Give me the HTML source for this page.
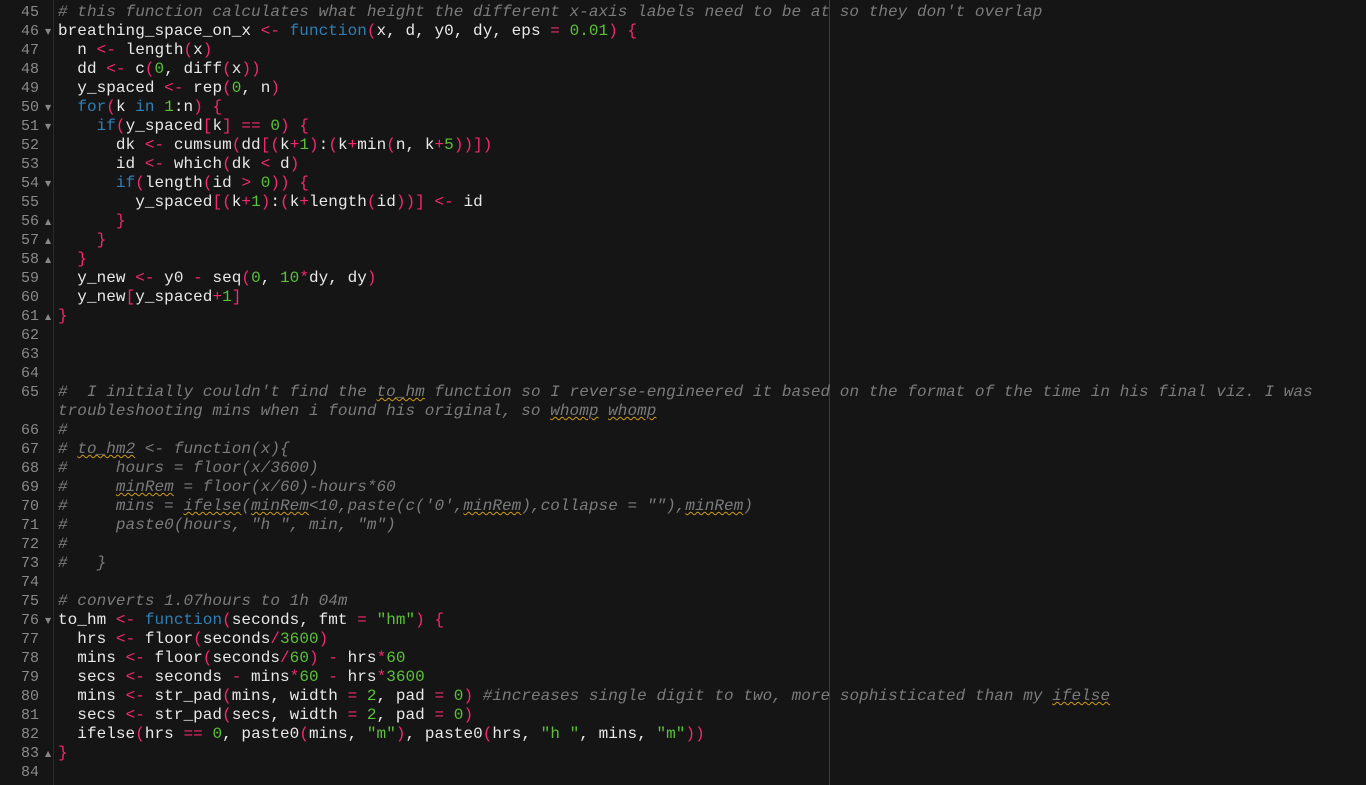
<!DOCTYPE html>
<html><head><meta charset="utf-8"><style>
html,body{margin:0;padding:0;background:#151515;width:1366px;height:785px;overflow:hidden}
#g{position:absolute;left:0;top:0;width:53px;height:785px;border-right:1px solid #2a2a2a}
#m{position:absolute;left:829px;top:0;width:1px;height:785px;background:#3c3c3c}
.l{position:absolute;left:0;height:19px;line-height:19px;font-family:"Liberation Mono",monospace;font-size:16px;white-space:pre;color:#e8e8e8}
.n{position:absolute;left:0;width:39px;text-align:right;color:#8a8a8a;font-family:"Liberation Mono",monospace;font-size:15px;line-height:19px;height:19px}
.a{position:absolute;left:45px;color:#888;font-size:8px;line-height:19px;height:19px;font-family:"DejaVu Sans",sans-serif}
.t{position:absolute;left:58px;line-height:19px;height:19px;letter-spacing:0.05px}
.c{color:#7b7b7b;font-style:italic}
.k{color:#2f7fb5}
.o{color:#f4286f}
.d{color:#5cc13a}
.s{color:#5cc13a}
.w{text-decoration:underline wavy #d09a1a;text-decoration-thickness:1px}
</style></head><body>
<div id="g"></div><div id="m"></div>
<div class="l" style="top:3px"><span class="n">45</span><span class="t"><span class="c"># this function calculates what height the different x-axis labels need to be at so they don't overlap</span></span></div>
<div class="l" style="top:22px"><span class="n">46</span><span class="a">▼</span><span class="t">breathing_space_on_x <span class="o">&lt;-</span> <span class="k">function</span><span class="o">(</span>x, d, y0, dy, eps <span class="o">=</span> <span class="d">0.01</span><span class="o">)</span> <span class="o">{</span></span></div>
<div class="l" style="top:41px"><span class="n">47</span><span class="t">  n <span class="o">&lt;-</span> length<span class="o">(</span>x<span class="o">)</span></span></div>
<div class="l" style="top:60px"><span class="n">48</span><span class="t">  dd <span class="o">&lt;-</span> c<span class="o">(</span><span class="d">0</span>, diff<span class="o">(</span>x<span class="o">))</span></span></div>
<div class="l" style="top:79px"><span class="n">49</span><span class="t">  y_spaced <span class="o">&lt;-</span> rep<span class="o">(</span><span class="d">0</span>, n<span class="o">)</span></span></div>
<div class="l" style="top:98px"><span class="n">50</span><span class="a">▼</span><span class="t">  <span class="k">for</span><span class="o">(</span>k <span class="k">in</span> <span class="d">1</span>:n<span class="o">)</span> <span class="o">{</span></span></div>
<div class="l" style="top:117px"><span class="n">51</span><span class="a">▼</span><span class="t">    <span class="k">if</span><span class="o">(</span>y_spaced<span class="o">[</span>k<span class="o">]</span> <span class="o">==</span> <span class="d">0</span><span class="o">)</span> <span class="o">{</span></span></div>
<div class="l" style="top:136px"><span class="n">52</span><span class="t">      dk <span class="o">&lt;-</span> cumsum<span class="o">(</span>dd<span class="o">[(</span>k<span class="o">+</span><span class="d">1</span><span class="o">)</span>:<span class="o">(</span>k<span class="o">+</span>min<span class="o">(</span>n, k<span class="o">+</span><span class="d">5</span><span class="o">))])</span></span></div>
<div class="l" style="top:155px"><span class="n">53</span><span class="t">      id <span class="o">&lt;-</span> which<span class="o">(</span>dk <span class="o">&lt;</span> d<span class="o">)</span></span></div>
<div class="l" style="top:174px"><span class="n">54</span><span class="a">▼</span><span class="t">      <span class="k">if</span><span class="o">(</span>length<span class="o">(</span>id <span class="o">&gt;</span> <span class="d">0</span><span class="o">))</span> <span class="o">{</span></span></div>
<div class="l" style="top:193px"><span class="n">55</span><span class="t">        y_spaced<span class="o">[(</span>k<span class="o">+</span><span class="d">1</span><span class="o">)</span>:<span class="o">(</span>k<span class="o">+</span>length<span class="o">(</span>id<span class="o">))]</span> <span class="o">&lt;-</span> id</span></div>
<div class="l" style="top:212px"><span class="n">56</span><span class="a">▲</span><span class="t">      <span class="o">}</span></span></div>
<div class="l" style="top:231px"><span class="n">57</span><span class="a">▲</span><span class="t">    <span class="o">}</span></span></div>
<div class="l" style="top:250px"><span class="n">58</span><span class="a">▲</span><span class="t">  <span class="o">}</span></span></div>
<div class="l" style="top:269px"><span class="n">59</span><span class="t">  y_new <span class="o">&lt;-</span> y0 <span class="o">-</span> seq<span class="o">(</span><span class="d">0</span>, <span class="d">10</span><span class="o">*</span>dy, dy<span class="o">)</span></span></div>
<div class="l" style="top:288px"><span class="n">60</span><span class="t">  y_new<span class="o">[</span>y_spaced<span class="o">+</span><span class="d">1</span><span class="o">]</span></span></div>
<div class="l" style="top:307px"><span class="n">61</span><span class="a">▲</span><span class="t"><span class="o">}</span></span></div>
<div class="l" style="top:326px"><span class="n">62</span></div>
<div class="l" style="top:345px"><span class="n">63</span></div>
<div class="l" style="top:364px"><span class="n">64</span></div>
<div class="l" style="top:383px"><span class="n">65</span><span class="t"><span class="c">#  I initially couldn't find the <span class="w">to_hm</span> function so I reverse-engineered it based on the format of the time in his final viz. I was</span></span></div>
<div class="l" style="top:402px"><span class="t"><span class="c">troubleshooting mins when i found his original, so <span class="w">whomp</span> <span class="w">whomp</span></span></span></div>
<div class="l" style="top:421px"><span class="n">66</span><span class="t"><span class="c">#</span></span></div>
<div class="l" style="top:440px"><span class="n">67</span><span class="t"><span class="c"># <span class="w">to_hm2</span> &lt;- function(x){</span></span></div>
<div class="l" style="top:459px"><span class="n">68</span><span class="t"><span class="c">#     hours = floor(x/3600)</span></span></div>
<div class="l" style="top:478px"><span class="n">69</span><span class="t"><span class="c">#     <span class="w">minRem</span> = floor(x/60)-hours*60</span></span></div>
<div class="l" style="top:497px"><span class="n">70</span><span class="t"><span class="c">#     mins = <span class="w">ifelse</span>(<span class="w">minRem</span>&lt;10,paste(c('0',<span class="w">minRem</span>),collapse = ""),<span class="w">minRem</span>)</span></span></div>
<div class="l" style="top:516px"><span class="n">71</span><span class="t"><span class="c">#     paste0(hours, "h ", min, "m")</span></span></div>
<div class="l" style="top:535px"><span class="n">72</span><span class="t"><span class="c">#</span></span></div>
<div class="l" style="top:554px"><span class="n">73</span><span class="t"><span class="c">#   }</span></span></div>
<div class="l" style="top:573px"><span class="n">74</span></div>
<div class="l" style="top:592px"><span class="n">75</span><span class="t"><span class="c"># converts 1.07hours to 1h 04m</span></span></div>
<div class="l" style="top:611px"><span class="n">76</span><span class="a">▼</span><span class="t">to_hm <span class="o">&lt;-</span> <span class="k">function</span><span class="o">(</span>seconds, fmt <span class="o">=</span> <span class="s">"hm"</span><span class="o">)</span> <span class="o">{</span></span></div>
<div class="l" style="top:630px"><span class="n">77</span><span class="t">  hrs <span class="o">&lt;-</span> floor<span class="o">(</span>seconds<span class="o">/</span><span class="d">3600</span><span class="o">)</span></span></div>
<div class="l" style="top:649px"><span class="n">78</span><span class="t">  mins <span class="o">&lt;-</span> floor<span class="o">(</span>seconds<span class="o">/</span><span class="d">60</span><span class="o">)</span> <span class="o">-</span> hrs<span class="o">*</span><span class="d">60</span></span></div>
<div class="l" style="top:668px"><span class="n">79</span><span class="t">  secs <span class="o">&lt;-</span> seconds <span class="o">-</span> mins<span class="o">*</span><span class="d">60</span> <span class="o">-</span> hrs<span class="o">*</span><span class="d">3600</span></span></div>
<div class="l" style="top:687px"><span class="n">80</span><span class="t">  mins <span class="o">&lt;-</span> str_pad<span class="o">(</span>mins, width <span class="o">=</span> <span class="d">2</span>, pad <span class="o">=</span> <span class="d">0</span><span class="o">)</span> <span class="c">#increases single digit to two, more sophisticated than my <span class="w">ifelse</span></span></span></div>
<div class="l" style="top:706px"><span class="n">81</span><span class="t">  secs <span class="o">&lt;-</span> str_pad<span class="o">(</span>secs, width <span class="o">=</span> <span class="d">2</span>, pad <span class="o">=</span> <span class="d">0</span><span class="o">)</span></span></div>
<div class="l" style="top:725px"><span class="n">82</span><span class="t">  ifelse<span class="o">(</span>hrs <span class="o">==</span> <span class="d">0</span>, paste0<span class="o">(</span>mins, <span class="s">"m"</span><span class="o">)</span>, paste0<span class="o">(</span>hrs, <span class="s">"h "</span>, mins, <span class="s">"m"</span><span class="o">))</span></span></div>
<div class="l" style="top:744px"><span class="n">83</span><span class="a">▲</span><span class="t"><span class="o">}</span></span></div>
<div class="l" style="top:763px"><span class="n">84</span></div>
</body></html>
